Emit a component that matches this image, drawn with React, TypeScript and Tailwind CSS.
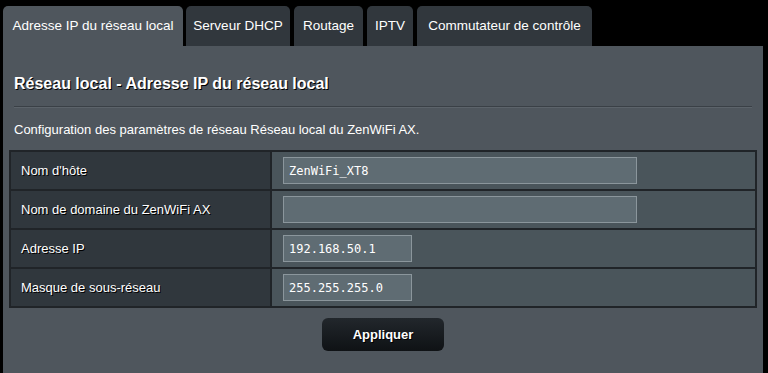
import React from 'react';

const tabs = [
  { id: 'lan', label: 'Adresse IP du réseau local', w: 'w-[180px]' },
  { id: 'dhcp', label: 'Serveur DHCP', w: 'w-[104px]' },
  { id: 'route', label: 'Routage', w: 'w-[69px]' },
  { id: 'iptv', label: 'IPTV', w: 'w-[46px]' },
  { id: 'switch', label: 'Commutateur de contrôle', w: 'w-[175px]' },
];

const rows = [
  { label: "Nom d'hôte", value: 'ZenWiFi_XT8', wide: true },
  { label: 'Nom de domaine du ZenWiFi AX', value: '', wide: true },
  { label: 'Adresse IP', value: '192.168.50.1', wide: false },
  { label: 'Masque de sous-réseau', value: '255.255.255.0', wide: false },
];

const App: React.FC = () => {
  const [active, setActive] = React.useState('lan');

  return (
    <div className="w-[768px] h-[373px] bg-black overflow-hidden pl-[3px] pr-[5px] pt-[6px] font-['Liberation_Sans',Arial,sans-serif]">
      {/* Tabs */}
      <div className="flex gap-[4px] h-[40px]">
        {tabs.map((t) => (
          <button
            key={t.id}
            onClick={() => setActive(t.id)}
            className={`${t.w} h-full shrink-0 whitespace-nowrap rounded-t-[5px] text-[13.5px] text-white ${
              active === t.id ? 'bg-[#4f565d] -mr-[1px]' : 'bg-[#31373d]'
            }`}
          >
            {t.label}
          </button>
        ))}
      </div>

      {/* Panel */}
      <div className="bg-[#4f565d] h-[330px] px-[6px]">
        <div className="px-[5px] pt-[28px]">
          <h2 className="text-[16px] font-bold text-white leading-[20px] [text-shadow:1px_1px_0_#000]">
            Réseau local - Adresse IP du réseau local
          </h2>
          <div className="mt-[12px] h-[2px] bg-[#3a4046] border-b border-[#5c636a]" />
          <p className="mt-[14px] text-[13px] text-white leading-[16px]">
            Configuration des paramètres de réseau Réseau local du ZenWiFi AX.
          </p>
        </div>

        <table className="mt-[12px] w-[748px] border-collapse border-2 border-[#202428]">
          <tbody>
            {rows.map((r) => (
              <tr key={r.label} className="h-[39px]">
                <th className="w-[261px] bg-[#30373d] border-2 border-[#202428] text-left font-normal text-[13px] text-white pl-[10px] [text-shadow:1px_1px_0_#000]">
                  {r.label}
                </th>
                <td className="bg-[#4a555b] border-2 border-[#202428] pl-[11px]">
                  <input
                    readOnly
                    value={r.value}
                    className={`${r.wide ? 'w-[354px]' : 'w-[129px]'} h-[27px] bg-[#5f6c73] border border-[#8b969c] px-[5px] text-[12px] text-white font-['DejaVu_Sans_Mono',monospace] outline-none align-middle`}
                  />
                </td>
              </tr>
            ))}
          </tbody>
        </table>

        <div className="flex justify-center mt-[10px]">
          <button className="w-[122px] h-[33px] rounded-[6px] bg-gradient-to-b from-[#22272c] to-[#0f1215] text-white text-[13px] font-bold [text-shadow:1px_1px_0_#000]">
            Appliquer
          </button>
        </div>
      </div>
    </div>
  );
};

export default App;
